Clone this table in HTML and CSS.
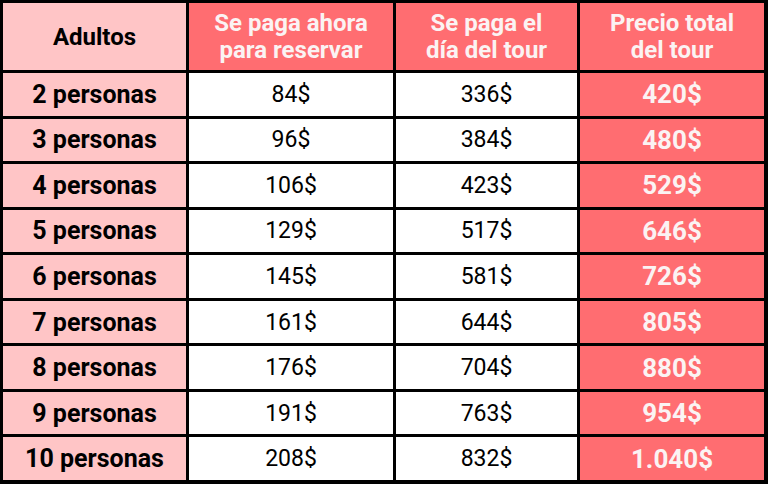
FILE: index.html
```html
<!DOCTYPE html>
<html lang="es">
<head>
<meta charset="utf-8">
<title>Precios</title>
<link rel="stylesheet" href="styles.css">
</head>
<body>
<div class="table">
  <div class="cell label head-label">Adultos</div>
  <div class="cell head">Se paga ahora<br>para reservar</div>
  <div class="cell head">Se paga el<br>día del tour</div>
  <div class="cell head">Precio total<br>del tour</div>

  <div class="cell label">2 personas</div><div class="cell num">84$</div><div class="cell num">336$</div><div class="cell total">420$</div>
  <div class="cell label">3 personas</div><div class="cell num">96$</div><div class="cell num">384$</div><div class="cell total">480$</div>
  <div class="cell label">4 personas</div><div class="cell num">106$</div><div class="cell num">423$</div><div class="cell total">529$</div>
  <div class="cell label">5 personas</div><div class="cell num">129$</div><div class="cell num">517$</div><div class="cell total">646$</div>
  <div class="cell label">6 personas</div><div class="cell num">145$</div><div class="cell num">581$</div><div class="cell total">726$</div>
  <div class="cell label">7 personas</div><div class="cell num">161$</div><div class="cell num">644$</div><div class="cell total">805$</div>
  <div class="cell label">8 personas</div><div class="cell num">176$</div><div class="cell num">704$</div><div class="cell total">880$</div>
  <div class="cell label">9 personas</div><div class="cell num">191$</div><div class="cell num">763$</div><div class="cell total">954$</div>
  <div class="cell label">10 personas</div><div class="cell num">208$</div><div class="cell num">832$</div><div class="cell total">1.040$</div>
</div>
</body>
</html>
```
FILE: styles.css
```css
html, body {
  margin: 0;
  padding: 0;
  background: #000;
}
.table {
  box-sizing: border-box;
  width: 768px;
  height: 484px;
  background: #000;
  padding: 3px 4px 4px 3px;
  display: grid;
  grid-template-columns: 183px 204px 181px 184px;
  grid-template-rows: 67px repeat(9, 1fr);
  gap: 3px;
  font-family: Roboto, "Liberation Sans", sans-serif;
}
.cell {
  display: flex;
  align-items: center;
  justify-content: center;
  text-align: center;
}
.label {
  background: #ffc5c6;
  color: #000;
  font-weight: 700;
  font-size: 25px;
}
.head-label {
  font-size: 24px;
}
.head {
  background: #ff6d71;
  color: #fbf3f3;
  font-weight: 700;
  font-size: 24px;
  line-height: 27px;
}
.num {
  background: #fff;
  color: #000;
  font-size: 23px;
}
.total {
  background: #ff6d71;
  color: #fbf3f3;
  font-weight: 700;
  font-size: 26px;
}
```
